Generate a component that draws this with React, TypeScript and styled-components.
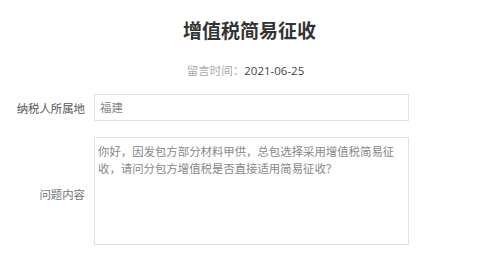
import React from "react";
import styled, { createGlobalStyle } from "styled-components";

const Global = createGlobalStyle`
  html, body { margin: 0; padding: 0; background: #fff; }
  body { font-family: "Noto Sans CJK SC", "Noto Sans", sans-serif; }
`;

const Page = styled.div`
  width: 483px;
  height: 258px;
  box-sizing: border-box;
  padding-top: 18px;
  overflow: hidden;
`;

const Title = styled.h1`
  margin: 0;
  padding-left: 16px;
  text-align: center;
  font-size: 19px;
  line-height: 24px;
  font-weight: 700;
  color: #333;
`;

const Meta = styled.div`
  margin-top: 21px;
  padding-left: 8px;
  text-align: center;
  font-size: 11.5px;
  line-height: 14px;
  color: #aaa;
`;

const MetaValue = styled.span`
  color: #444;
  font-family: "Open Sans", "Noto Sans", sans-serif;
`;

const Form = styled.div`
  margin-top: 16px;
  display: flex;
  flex-direction: column;
  gap: 16px;
`;

const Row = styled.div`
  display: grid;
  grid-template-columns: 85px 315px;
  column-gap: 9px;
  align-items: center;
`;

const Label = styled.div<{ $muted?: boolean }>`
  text-align: right;
  font-size: 11.4px;
  line-height: 14px;
  color: ${(p) => (p.$muted ? "#777" : "#555")};
  padding-top: ${(p) => (p.$muted ? "6px" : "0")};
`;

const Field = styled.div<{ $tall?: boolean }>`
  box-sizing: border-box;
  height: ${(p) => (p.$tall ? "108px" : "27px")};
  border: 1px solid #e2e2e2;
  padding: ${(p) => (p.$tall ? "5px 6px 0 3px" : "0 5px")};
  display: flex;
  align-items: ${(p) => (p.$tall ? "flex-start" : "center")};
  font-size: 11.4px;
  line-height: 17px;
  color: #888;
`;

export default function App() {
  return (
    <Page>
      <Global />
      <Title>增值税简易征收</Title>
      <Meta>
        留言时间：<MetaValue>2021-06-25</MetaValue>
      </Meta>
      <Form>
        <Row>
          <Label>纳税人所属地</Label>
          <Field>福建</Field>
        </Row>
        <Row>
          <Label $muted>问题内容</Label>
          <Field $tall>
            你好，因发包方部分材料甲供，总包选择采用增值税简易征收，请问分包方增值税是否直接适用简易征收？
          </Field>
        </Row>
      </Form>
    </Page>
  );
}
